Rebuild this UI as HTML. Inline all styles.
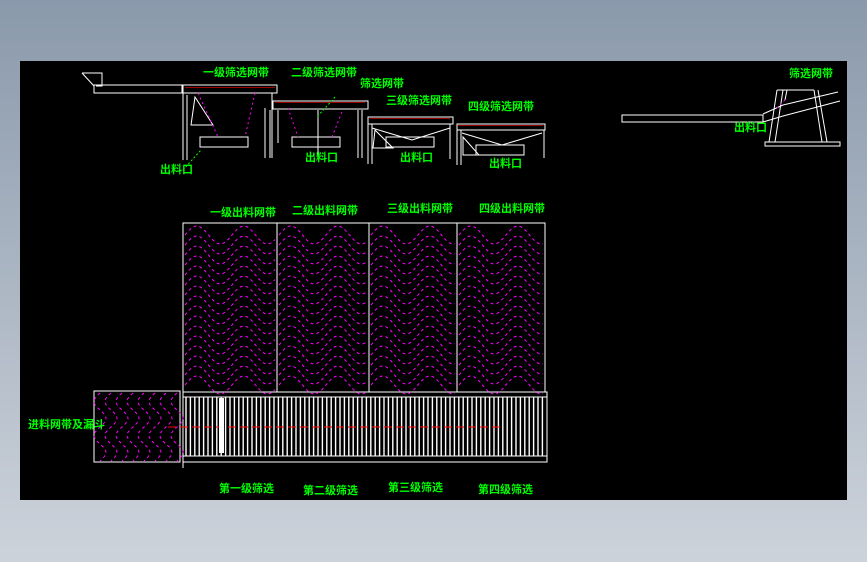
<!DOCTYPE html>
<html><head><meta charset="utf-8"><style>
html,body{margin:0;padding:0;width:867px;height:562px;overflow:hidden;background:linear-gradient(#8a99ab,#cdd3db);}
svg{position:absolute;left:0;top:0}
text{font-family:"Liberation Sans","Noto Sans CJK SC",sans-serif;fill:#00ff00;font-weight:bold;font-size:11px}
</style></head><body>
<svg width="867" height="562" xmlns="http://www.w3.org/2000/svg">
<rect x="20" y="61" width="827" height="439" fill="#000"/>
<g stroke="#fff" fill="none" stroke-width="1">
<path d="M82 73h20v13h-6M82 73l12 13"/>
<rect x="94" y="85" width="88" height="8"/>
<rect x="183" y="85" width="94" height="8"/>
<path d="M183 85v75M187 95v65M272 93v65M195 97l18 28h-22z"/>
<rect x="200" y="137" width="48" height="10"/>
<rect x="273" y="101" width="95" height="8"/>
<path d="M265 108v50M270 110v48M278 110v33M318 110v48M358 110v48M362 110v48"/>
<rect x="292" y="137" width="48" height="10"/>
<rect x="368" y="117" width="85" height="7"/>
<path d="M368 124v40M372 124v40M450 124v35M372 128l40 12l38 -12M375 130l18 18h-20z"/>
<rect x="386" y="137" width="48" height="10"/>
<rect x="457" y="124" width="88" height="6"/>
<path d="M457 130v35M461 130v35M544 130v28M462 133l40 12l40-12M463 137l16 18h-16z"/>
<rect x="476" y="145" width="48" height="10"/>
<rect x="622" y="115" width="141" height="7"/>
<path d="M763 114l20-9l55-13M763 122l20-6l57-15M777 90h37M777 90l-8 52M783 90l-8 52M787 90l-2 10M814 90l8 52M818 90l9 52M765 142h75v4h-75z"/>
<rect x="183" y="223" width="362" height="169"/>
<path d="M277 223v169M369 223v169M457 223v169"/>
<rect x="94" y="391" width="86" height="71"/>
<rect x="183" y="392" width="364" height="70"/>
<path d="M183 462v6M183 397h364M183 456h364"/>
</g>
<g id="bars" stroke="#fff" stroke-width="1.4"></g>
<path d="M168 427h335" stroke="#f00" stroke-dasharray="8 4"/>
<rect x="219" y="398" width="5" height="55" fill="#fff"/>
<g id="waves" stroke="#ff00ff" fill="none" stroke-dasharray="3 3"></g>
<g stroke="#ff00ff" stroke-dasharray="2 3" fill="none">
<path d="M198 93l20 44M255 93l-10 44M288 108l10 29M342 112l-10 25M785 100l-8 8"/>
</g>
<g fill="#f00"><rect x="185" y="87" width="90" height="1" opacity=".6"/><rect x="275" y="102" width="90" height="1" opacity=".6"/><rect x="370" y="118" width="80" height="1" opacity=".6"/><rect x="458" y="125" width="85" height="1" opacity=".6"/></g>
<path d="M183 170l18-20M335 97l-18 20" stroke="#0f0" stroke-dasharray="2 2"/>
<text x="203" y="76">一级筛选网带</text>
<text x="291" y="76">二级筛选网带</text>
<text x="360" y="87">筛选网带</text>
<text x="386" y="104">三级筛选网带</text>
<text x="468" y="110">四级筛选网带</text>
<text x="160" y="173">出料口</text>
<text x="305" y="161">出料口</text>
<text x="400" y="161">出料口</text>
<text x="489" y="167">出料口</text>
<text x="789" y="77">筛选网带</text>
<text x="734" y="131">出料口</text>
<text x="210" y="216">一级出料网带</text>
<text x="292" y="214">二级出料网带</text>
<text x="387" y="212">三级出料网带</text>
<text x="479" y="212">四级出料网带</text>
<text x="28" y="428">进料网带及漏斗</text>
<text x="219" y="492">第一级筛选</text>
<text x="303" y="494">第二级筛选</text>
<text x="388" y="491">第三级筛选</text>
<text x="478" y="493">第四级筛选</text>
</svg>
<script>
var ns="http://www.w3.org/2000/svg";
var w=document.getElementById('waves');
function waves(x0,x1,y0,y1,period,amp,sp){
 for(var y=y0;y<=y1;y+=sp){var d="";
  for(var x=x0;x<=x1;x+=2){var yy=y-amp*Math.sin((x-x0)/period*2*Math.PI);d+=(d?"L":"M")+x+" "+yy.toFixed(1);}
  var p=document.createElementNS(ns,"path");p.setAttribute("d",d);w.appendChild(p);}
}
waves(185,276,235,385,47,9,10);
waves(279,368,235,385,47,9,10);
waves(371,456,235,385,47,9,10);
waves(459,544,235,385,47,9,10);
for(var x=100;x<178;x+=11){var d="";for(var y=393;y<=461;y+=2){var xx=x-6*Math.sin((y-393)/34*2*Math.PI);d+=(d?"L":"M")+xx.toFixed(1)+" "+y;}var p=document.createElementNS(ns,"path");p.setAttribute("d",d);w.appendChild(p);}
var b=document.getElementById('bars');
for(var x=186;x<546;x+=4.4){var l=document.createElementNS(ns,"line");l.setAttribute("x1",x.toFixed(1));l.setAttribute("x2",x.toFixed(1));l.setAttribute("y1",397);l.setAttribute("y2",456);b.appendChild(l);}
</script>
</body></html>
